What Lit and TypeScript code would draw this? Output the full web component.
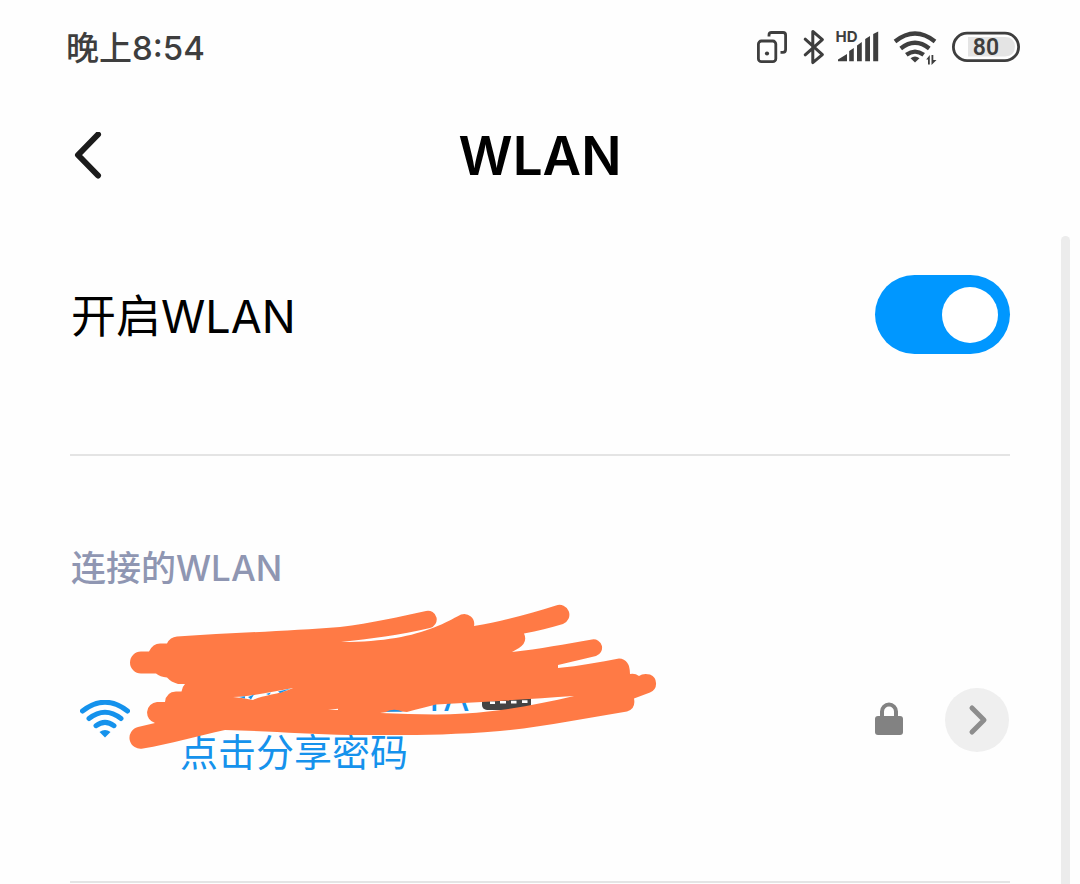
import { LitElement, html, css, svg } from "lit";
import { customElement, state } from "lit/decorators.js";

@customElement("status-bar")
class StatusBar extends LitElement {
  static styles = css`
    :host {
      display: flex;
      align-items: center;
      justify-content: space-between;
      height: 96px;
      box-sizing: border-box;
      padding: 0 60px 0 66px;
      color: #3e3e3e;
    }
    .time {
      font-size: 33px;
      font-weight: 500;
      line-height: 40px;
    }
    .icons {
      display: flex;
      align-items: center;
    }
    svg {
      display: block;
    }
    .hd {
      font: 700 15px Inter, sans-serif;
    }
    .level {
      font: 600 23px Roboto, sans-serif;
    }
  `;

  render() {
    return html`
      <span class="time">晚上8:54</span>
      <div class="icons">
        <svg width="46" height="40" viewBox="755 28 46 40" fill="none" stroke="currentColor" stroke-width="2.8" role="img" aria-label="双开">
          <path d="M769 36.500V35Q769 32.500 771.500 32.500H783Q785.600 32.500 785.600 35V49.500Q785.600 52.300 783 52.300H780.500" />
          <rect x="758.400" y="41" width="17.400" height="20.700" rx="3" />
          <circle cx="767" cy="53.500" r="2.100" fill="currentColor" stroke="none" />
        </svg>
        <svg width="34" height="40" viewBox="801 28 34 40" fill="none" stroke="currentColor" stroke-width="3" stroke-linejoin="round" stroke-linecap="round" role="img" aria-label="蓝牙">
          <path d="M805.200 39.200L822.400 54.600L812.800 62.600V31.400L822.400 39.600L805.200 54.800" />
        </svg>
        <svg width="58" height="40" viewBox="835 28 58 40" fill="currentColor" role="img" aria-label="信号">
          <text class="hd" x="835.500" y="42">HD</text>
          <path d="M838 61.200V59.600L847 54V61.200ZM849.200 61.200V51L853.800 48V61.200ZM857 61.200V45.500L861.800 42V61.200ZM865.200 61.200V39L870 36V61.200ZM873.200 61.200V34L878.200 31.500V61.200Z" />
        </svg>
        <svg width="58" height="40" viewBox="893 28 58 40" fill="none" stroke="currentColor" stroke-width="4.200" role="img" aria-label="WLAN">
          <path d="M895 41.500Q915 25.500 935 41.500M900.700 48.500Q915 37 929.300 48.500M906.300 54.800Q915 48.300 923.700 54.800" />
          <path d="M910.500 58.300Q915 54.700 919.500 58.300L915 62.500Z" fill="currentColor" stroke="none" />
          <path d="M926.200 59.500L929.800 55V64.500H928V59.500ZM931.500 55H933.300V60H936.500L931.500 65Z" fill="currentColor" stroke="none" />
        </svg>
        <svg width="69" height="40" viewBox="951 28 69 40" role="img" aria-label="电量">
          <path d="M968 37H1005Q1014.500 37 1015 46.800Q1014.500 56.500 1005 56.500H968Z" fill="#e4e4e4" />
          <rect x="953.400" y="33.200" width="65.200" height="27.400" rx="13.700" fill="none" stroke="currentColor" stroke-width="2.800" />
          <text class="level" x="986" y="55" text-anchor="middle" fill="currentColor">80</text>
        </svg>
      </div>
    `;
  }
}

@customElement("connected-network")
class ConnectedNetwork extends LitElement {
  static styles = css`
    :host {
      display: flex;
      align-items: center;
      position: relative;
      height: 256px;
      padding: 0 1px 0 10px;
    }
    svg {
      display: block;
      flex: none;
    }
    .texts {
      display: flex;
      flex-direction: column;
      flex: 1;
      padding-left: 50px;
      color: #1592ec;
      font-size: 38px;
    }
    .name {
      display: flex;
      align-items: center;
      line-height: 64px;
      padding-left: 242px;
    }
    .badge {
      width: 49px;
      height: 26px;
      margin-left: 12px;
      border-radius: 5px;
      background: #444;
    }
    .share {
      line-height: 46px;
      color: inherit;
      text-decoration: none;
    }
    .lock {
      margin-right: 42px;
    }
    .detail {
      display: grid;
      place-items: center;
      width: 64px;
      height: 64px;
      padding: 0;
      border: 0;
      border-radius: 50%;
      background: #efefef;
    }
    .scribble {
      position: absolute;
      left: 55px;
      top: 8px;
      pointer-events: none;
    }
  `;

  private scribble() {
    return svg`
      <path
        fill="#ff7a45"
        fill-rule="evenodd"
        d="M177 636.500C230 633 290 631 340 627C372 623 398 617 426 611
        A8.700 8.700 0 0 1 430 628C400 635 370 639 341 642C385 642 412 636 434 627.500C446 623 452 619 461 614.500
        A10 10 0 0 1 474 626C500 622 528 614 556 605.500
        A9.800 9.800 0 0 1 563 624C550 628 538 631 524 633.500Q528 642 519 648L512 652C540 649 565 644 592 639.500
        A8.500 8.500 0 0 1 596 656L558 665V668C580 666 600 662 619 658.500
        Q630 659 630 674Q635 673 639 676Q643 673 650 674.500
        A9.700 9.700 0 0 1 650 692.500L634 698.500Q636 709 627 711.500
        C585 718 545 727 500 731C440 736 400 735 350 735C305 734 265 731 225 730C198 736 170 744 143 748.500
        A11 11 0 0 1 138 727L155 723A10.700 10.700 0 0 1 157 702H165Q166 692 176 691.500H181.500Q182 687 185 684
        H178Q171 682 167 677.500Q160 677 156 673.500H141A11 11 0 0 1 141 651.500H149
        Q153 643 161 643.500H167Q170 637 177 636.500Z
        M233 697C256 696 275 691 293 688C278 695 262 695 253 700Q244 698 233 697Z
        M328 709.800L338 708.800V710Z
        M380 713Q394 710 407 712Q425 707 436 704.500C480 702 530 699 574 696C540 704 505 711 465 713.500C438 715.500 410 714 380 713Z"
      />
      <g fill="#1592ec">
        <path d="M239 697L245 696.300V698.600ZM248 697L254 694.500L251 699.500ZM266 694L271 692.400L269 695ZM278 691.500L291 688.500L280 693Z" />
        <path d="M386 711.800Q394 707.500 403 711.800Z" />
      </g>
      <path d="M490 701.500H495V704H490ZM500 701H506V703.500H500ZM511 700.700H516.500V703.500H511ZM522 700.200H527.500V703H522Z" fill="#fff" />
    `;
  }

  render() {
    return html`
      <svg width="50" height="40" viewBox="80 700 50 40" fill="none" stroke="#1592ec" stroke-width="5" stroke-linecap="round" aria-hidden="true">
        <path d="M82.500 711Q105 693.500 127.500 711M89 718.500Q105 706 121 718.500M96 725.700Q105 719 114 725.700" />
        <path d="M99.500 732Q105 728 110.500 732L105 737.500Z" fill="#1592ec" stroke="none" />
      </svg>
      <div class="texts">
        <span class="name">TA<span class="badge"></span></span>
        <a class="share" href="#share">点击分享密码</a>
      </div>
      <svg class="lock" width="28" height="36" viewBox="875 702 28 36" role="img" aria-label="已加密">
        <rect x="875" y="716" width="28" height="19" rx="3" fill="#828282" />
        <path d="M882 717V711.500A7 7 0 0 1 896 711.500V717" fill="none" stroke="#828282" stroke-width="4" />
      </svg>
      <button class="detail" aria-label="详情">
        <svg width="24" height="32" viewBox="0 0 24 32" fill="none" stroke="#8d8d8d" stroke-width="5" stroke-linecap="round" stroke-linejoin="round">
          <path d="M7 4L19 16L7 28" />
        </svg>
      </button>
      <svg class="scribble" width="540" height="155" viewBox="125 600 540 155" aria-hidden="true">${this.scribble()}</svg>
    `;
  }
}

@customElement("app-root")
class AppRoot extends LitElement {
  @state() private enabled = true;

  static styles = css`
    :host {
      display: flex;
      flex-direction: column;
      min-height: 100vh;
      background: #fefefe;
      color: #000;
      font-family: Inter, "Noto Sans CJK SC", sans-serif;
    }
    .header {
      display: grid;
      grid-template-columns: 64px 1fr 64px;
      align-items: center;
      height: 120px;
      padding: 0 56px;
    }
    .back {
      display: grid;
      place-items: center;
      height: 64px;
      padding: 0;
      border: 0;
      background: none;
    }
    .title {
      margin: 0;
      text-align: center;
      font-size: 53px;
      font-weight: 600;
      line-height: 64px;
    }
    .body {
      display: flex;
      flex: 1;
    }
    .content {
      flex: 1;
      padding: 59px 51px 0 70px;
    }
    .toggle {
      display: flex;
      align-items: center;
      justify-content: space-between;
      padding: 0 0 100px 1px;
      font-size: 45px;
      line-height: 64px;
    }
    .toggle label {
      padding-top: 4px;
    }
    .switch {
      appearance: none;
      display: flex;
      align-items: center;
      width: 135px;
      height: 79px;
      margin: 0;
      padding: 0 12px;
      box-sizing: border-box;
      border-radius: 40px;
      background: #d8d8d8;
    }
    .switch::before {
      content: "";
      width: 56px;
      height: 56px;
      border-radius: 50%;
      background: #fff;
    }
    .switch:checked {
      justify-content: flex-end;
      background: #0097ff;
    }
    .line {
      height: 2px;
      margin: 0;
      border: 0;
      background: #e4e4e4;
    }
    .label {
      margin: 0;
      padding: 88px 0 0 1px;
      color: #8f96b2;
      font-size: 35px;
      font-weight: 500;
      line-height: 48px;
    }
    .network {
      padding-bottom: 33px;
    }
    .scrollbar {
      width: 9px;
      margin: 20px 10px 0 0;
      border-radius: 5px 5px 0 0;
      background: #ececec;
    }
  `;

  render() {
    return html`
      <status-bar></status-bar>
      <header class="header">
        <button class="back" aria-label="返回">
          <svg width="28" height="48" viewBox="0 0 28 48" fill="none" stroke="#1b1b1b" stroke-width="6" stroke-linecap="round" stroke-linejoin="round">
            <path d="M24 2.500L4 23L24 43.500" />
          </svg>
        </button>
        <h1 class="title">WLAN</h1>
      </header>
      <div class="body">
        <main class="content">
          <div class="toggle">
            <label for="wlan">开启WLAN</label>
            <input
              id="wlan"
              class="switch"
              type="checkbox"
              role="switch"
              .checked=${this.enabled}
              @change=${(e: Event) => (this.enabled = (e.target as HTMLInputElement).checked)}
            />
          </div>
          <hr class="line" />
          <h2 class="label">连接的WLAN</h2>
          <div class="network"><connected-network></connected-network></div>
          <hr class="line" />
        </main>
        <div class="scrollbar"></div>
      </div>
    `;
  }
}
